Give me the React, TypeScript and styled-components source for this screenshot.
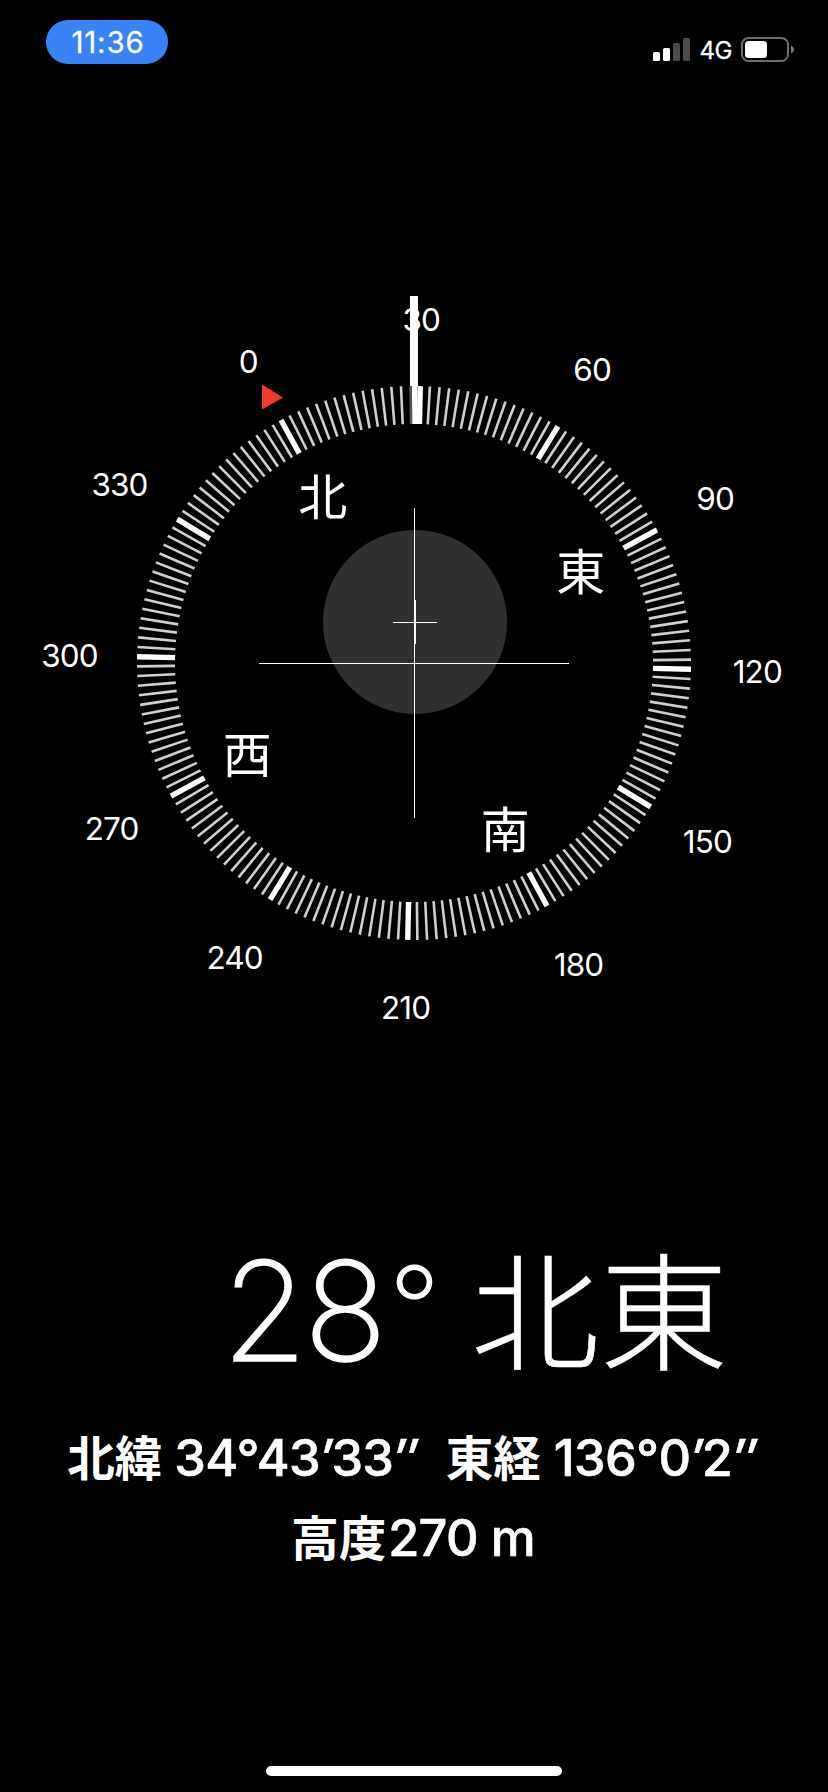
import React from "react";
import styled, { createGlobalStyle } from "styled-components";

const GlobalStyle = createGlobalStyle`
  * { box-sizing: border-box; }
  html, body { margin: 0; padding: 0; background: #000; }
`;

const HEADING = 28.7;
const CENTER_X = 414;
const CENTER_Y = 403;

const Screen = styled.main`
  width: 828px;
  height: 1792px;
  background: #000;
  color: #fff;
  font-family: Inter, "Noto Sans CJK JP", sans-serif;
  display: flex;
  flex-direction: column;
  overflow: hidden;
`;

const StatusBar = styled.header`
  height: 88px;
  padding: 20px 34px 0 46px;
  display: flex;
  justify-content: space-between;
  align-items: flex-start;
`;

const TimePill = styled.div`
  width: 122px;
  height: 44px;
  padding-left: 2px;
  border-radius: 22px;
  background: #3a82f7;
  display: flex;
  align-items: center;
  justify-content: center;
  font-size: 29.5px;
  font-weight: 400;
  -webkit-text-stroke: 0.3px #fff;
  letter-spacing: 0.8px;
`;

const StatusIcons = styled.div`
  display: flex;
  align-items: center;
  padding-top: 17px;
  height: 42px;
`;

const Network = styled.span`
  margin: 2px 9px 0 8px;
  font-size: 24px;
  line-height: 24px;
  font-weight: 400;
  -webkit-text-stroke: 0.3px #fff;
  letter-spacing: -0.4px;
`;

const Dial = styled.svg`
  display: block;
  margin-top: 172px;
  flex: none;
`;

const DegreeLabel = styled.text`
  font-size: 31.5px;
  font-weight: 400;
  letter-spacing: -0.9px;
  fill: #fff;
  text-anchor: middle;
`;

const CardinalLabel = styled.text`
  font-family: "Noto Sans CJK JP", sans-serif;
  font-size: 49px;
  font-weight: 400;
  fill: #fff;
  text-anchor: middle;
`;

const Heading = styled.h1`
  margin: 160px 0 0 222px;
  height: 180px;
  display: flex;
  white-space: pre;
  font-weight: 300;
`;

const HeadingDegrees = styled.span`
  font-size: 138px;
  line-height: 182px;
  font-weight: 200;
  -webkit-text-stroke: 1.4px #fff;
  letter-spacing: -3.5px;
  width: 167px;
`;

const DegreeSign = styled.span`
  font-size: 112px;
  line-height: 172px;
  font-weight: 200;
  -webkit-text-stroke: 1.2px #fff;
  width: 82px;
`;

const HeadingDirection = styled.span`
  font-family: "Noto Sans CJK JP", sans-serif;
  font-size: 128px;
  line-height: 172px;
  letter-spacing: 1px;
  -webkit-text-stroke: 0.6px #fff;
`;

const Location = styled.section`
  margin-top: 15px;
  display: flex;
  flex-direction: column;
  align-items: center;
`;

const Line = styled.div<{ $shift?: number }>`
  display: flex;
  align-items: center;
  height: 80px;
  padding-right: ${(p) => p.$shift ?? 2}px;
`;

const Name = styled.span<{ $before?: number; $after: number }>`
  margin: 0 ${(p) => p.$after}px 0 ${(p) => p.$before ?? 0}px;
  font-size: 47.5px;
  font-weight: 600;
`;

const Value = styled.span`
  padding-top: 5px;
  font-size: 50.5px;
  font-weight: 500;
  -webkit-text-stroke: 0.6px #fff;
  letter-spacing: -0.7px;
`;

const Prime = styled.span`
  font-style: italic;
`;

const HomeIndicator = styled.div`
  width: 296px;
  height: 10px;
  border-radius: 5px;
  background: #fff;
  margin: auto auto 16px;
`;

const polar = (deg: number, r: number) => {
  const a = ((deg - HEADING) * Math.PI) / 180;
  return { x: CENTER_X + Math.sin(a) * r, y: CENTER_Y - Math.cos(a) * r };
};

const ticks = Array.from({ length: 180 }, (_, i) => i * 2);
const labels = Array.from({ length: 12 }, (_, i) => i * 30);
const cardinals = [
  { deg: 0, name: "北" },
  { deg: 90, name: "東" },
  { deg: 180, name: "南" },
  { deg: 270, name: "西" },
];

const tickColor = (deg: number) => {
  if (deg % 30 === 0) return "#fff";
  // The tick right under the needle is dimmed.
  return deg === 28 ? "#555" : "#d0d0d0";
};

function Compass() {
  return (
    <Dial width="828" height="800" viewBox="0 0 828 800">
      <circle cx="415" cy="362" r="92" fill="#303030" />
      <rect x="410" y="36" width="8" height="90" fill="#fff" />
      <rect x="412" y="126" width="5.5" height="38" fill="#fff" />
      {ticks.map((deg) => {
        const a = polar(deg, 277);
        const b = polar(deg, 239);
        return (
          <line
            key={deg}
            x1={a.x}
            y1={a.y}
            x2={b.x}
            y2={b.y}
            stroke={tickColor(deg)}
            strokeWidth={deg % 30 === 0 ? 5.4 : 2.6}
          />
        );
      })}
      {labels.map((deg) => {
        const p = polar(deg, 344);
        return <DegreeLabel key={deg} x={p.x - 0.6} y={p.y + 11.7}>{deg}</DegreeLabel>;
      })}
      {cardinals.map(({ deg, name }) => {
        const p = polar(deg, 190);
        return <CardinalLabel key={deg} x={p.x} y={p.y + 18.5}>{name}</CardinalLabel>;
      })}
      <path d="M262 124.5 L283 137.5 L262 149.5 Z" fill="#f23b2a" />
      <g fill="#fff">
        <rect x="414" y="248" width="1" height="310" />
        <rect x="259" y="403" width="310" height="1" />
        <rect x="415" y="340" width="1" height="44" />
        <rect x="393" y="362" width="44" height="1" />
      </g>
    </Dial>
  );
}

export default function App() {
  return (
    <Screen>
      <GlobalStyle />
      <StatusBar>
        <TimePill>11:36</TimePill>
        <StatusIcons>
          <svg width="38" height="24" viewBox="0 0 38 24">
            <rect x="0" y="14" width="7" height="9" rx="1.5" fill="#fff" />
            <rect x="10" y="10" width="7" height="13" rx="1.5" fill="#fff" />
            <rect x="20" y="5" width="7" height="18" rx="1.5" fill="#4a4a4a" />
            <rect x="30" y="0" width="7" height="23" rx="1.5" fill="#4a4a4a" />
          </svg>
          <Network>4G</Network>
          <svg width="53" height="25" viewBox="0 0 53 25">
            <rect x="1" y="1" width="46" height="23" rx="6.5" fill="none" stroke="#6e6e6e" strokeWidth="2" />
            <rect x="4" y="4" width="22" height="17" rx="3.5" fill="#fff" />
            <path d="M50 8.5 Q53 10 53 12.5 Q53 15 50 16.5 Z" fill="#7a7a7a" />
          </svg>
        </StatusIcons>
      </StatusBar>
      <Compass />
      <Heading>
        <HeadingDegrees>28</HeadingDegrees>
        <DegreeSign>°</DegreeSign>
        <HeadingDirection>北東</HeadingDirection>
      </Heading>
      <Location>
        <Line $shift={5}>
          <Name $after={12}>北緯</Name>
          <Value>34°43<Prime>′</Prime>33<Prime>″</Prime></Value>
          <Name $before={29} $after={13}>東経</Name>
          <Value>136°0<Prime>′</Prime>2<Prime>″</Prime></Value>
        </Line>
        <Line>
          <Name $after={2}>高度</Name>
          <Value>270 m</Value>
        </Line>
      </Location>
      <HomeIndicator />
    </Screen>
  );
}
